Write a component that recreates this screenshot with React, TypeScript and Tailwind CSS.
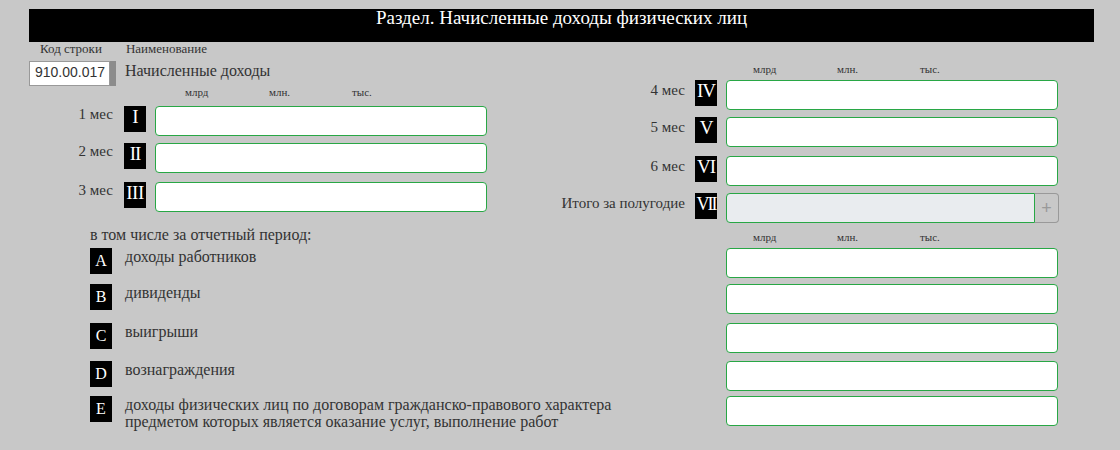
import React from 'react';

function Roman({ n }: { n: string }) {
  const tight = n === 'VII' ? 'tracking-[-2px] text-[18px]' : n === 'III' ? 'tracking-[-0.5px] text-[19px]' : 'tracking-[-1px] text-[19px]';
  return (
    <div className={`w-[22px] h-[26px] shrink-0 bg-black text-white flex justify-center leading-[22px] overflow-hidden whitespace-nowrap ${tight}`}>
      <span>{n}</span>
    </div>
  );
}

function Letter({ l }: { l: string }) {
  return (
    <div className="w-[22px] h-[26px] shrink-0 bg-black text-white flex items-center justify-center text-[16px] leading-none">
      {l}
    </div>
  );
}

function Field({ className = '' }: { className?: string }) {
  return <div className={`h-[30px] w-[332px] shrink-0 bg-white border-[1.5px] border-[#28a745] rounded-[4px] ${className}`} />;
}

function Units() {
  return (
    <div className="flex text-[11px] leading-[13px] text-[#333]">
      <span className="w-[84px]">млрд</span>
      <span className="w-[83px]">млн.</span>
      <span>тыс.</span>
    </div>
  );
}

function LeftRow({ label, n, mt }: { label: string; n: string; mt: string }) {
  return (
    <div className={`flex items-start h-[30px] ${mt}`}>
      <div className="w-[84px] text-right text-[15px] leading-[16px] text-[#333]">{label}</div>
      <div className="ml-[11px]"><Roman n={n} /></div>
      <Field className="ml-[9px]" />
    </div>
  );
}

function RightRow({ label, n, mt }: { label: string; n: string; mt: string }) {
  return (
    <div className={`flex items-start h-[30px] ${mt}`}>
      <div className="w-[145px] pt-[2px] text-right text-[15px] leading-[16px] text-[#333] whitespace-nowrap">{label}</div>
      <div className="ml-[10px]"><Roman n={n} /></div>
      <Field className="ml-[9px]" />
    </div>
  );
}

function BottomRow({ l, children, mt }: { l: string; children: React.ReactNode; mt: string }) {
  return (
    <div className={`flex items-start h-[30px] ${mt}`}>
      <div className="w-[697px] flex items-start">
        <div className="ml-[61px]"><Letter l={l} /></div>
        <div className="ml-[13px] text-[16px] leading-[17px] text-[#333]">{children}</div>
      </div>
      <Field />
    </div>
  );
}

export default function App() {
  return (
    <div className="min-h-[450px] bg-[#c8c8c8] pt-[9px] font-['Liberation_Serif','Times_New_Roman',serif]">
      <div className="ml-[29px] w-[1065px]">
        {/* Section header */}
        <div className="h-[33px] bg-black text-white text-center text-[19px] leading-[18px]">
          Раздел. Начисленные доходы физических лиц
        </div>

        <div className="flex">
          {/* Left column */}
          <div className="w-[511px]">
            <div className="flex h-[14px] text-[13px] leading-[14px] text-[#333]">
              <span className="ml-[11px]">Код строки</span>
              <span className="ml-[24px]">Наименование</span>
            </div>
            <div className="flex items-start mt-[5px] h-[25px]">
              <div className="w-[81px] h-[25px] bg-white border border-[#999] px-[5px] text-[14px] leading-[20px] text-[#333] font-['Liberation_Sans',Arial,sans-serif]">
                910.00.017
              </div>
              <div className="w-[6px] h-[25px] bg-[#8c8c8c]" />
              <div className="ml-[9px] pt-[1px] text-[16px] leading-[18px] text-[#333]">Начисленные доходы</div>
            </div>
            <div className="ml-[156px]"><Units /></div>
            <LeftRow label="1 мес" n="I" mt="mt-[7px]" />
            <LeftRow label="2 мес" n="II" mt="mt-[7px]" />
            <LeftRow label="3 мес" n="III" mt="mt-[9px]" />
          </div>

          {/* Right column */}
          <div className="flex-1">
            <div className="mt-[21px] ml-[213px]"><Units /></div>
            <RightRow label="4 мес" n="IV" mt="mt-[4px]" />
            <RightRow label="5 мес" n="V" mt="mt-[7px]" />
            <RightRow label="6 мес" n="VI" mt="mt-[9px]" />
            <div className="flex items-start h-[30px] mt-[7px]">
              <div className="w-[145px] pt-[2px] text-right text-[15px] leading-[16px] text-[#333] whitespace-nowrap">Итого за полугодие</div>
              <div className="ml-[10px]"><Roman n="VII" /></div>
              <div className="ml-[9px] flex h-[30px]">
                <div className="w-[309px] h-[30px] bg-[#e9ecef] border-[1.5px] border-[#28a745] rounded-l-[4px]" />
                <div className="w-[24px] h-[30px] border border-l-0 border-[#999] rounded-r-[4px] flex items-center justify-center text-[#999] text-[18px] leading-none font-['Liberation_Sans',Arial,sans-serif]">
                  +
                </div>
              </div>
            </div>
          </div>
        </div>

        {/* Breakdown */}
        <div className="flex h-[22px] mt-[3px]">
          <div className="w-[697px] pl-[61px] text-[16px] leading-[17px] text-[#333]">в том числе за отчетный период:</div>
          <div className="pt-[5px] pl-[27px]"><Units /></div>
        </div>
        <BottomRow l="A" mt="mt-0">доходы работников</BottomRow>
        <BottomRow l="B" mt="mt-[6px]">дивиденды</BottomRow>
        <BottomRow l="C" mt="mt-[9px]">выигрыши</BottomRow>
        <BottomRow l="D" mt="mt-[8px]">вознаграждения</BottomRow>
        <BottomRow l="E" mt="mt-[5px]">
          доходы физических лиц по договорам гражданско-правового характера
          <br />
          предметом которых является оказание услуг, выполнение работ
        </BottomRow>
      </div>
    </div>
  );
}
